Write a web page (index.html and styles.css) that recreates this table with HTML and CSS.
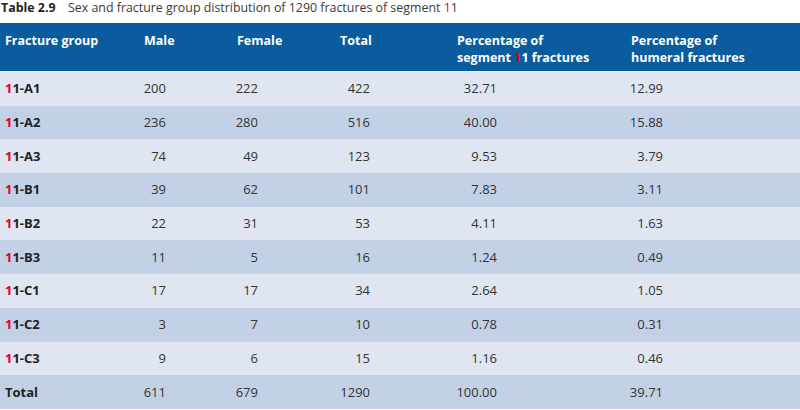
FILE: index.html
```html
<!DOCTYPE html>
<html lang="en">
<head>
<meta charset="utf-8">
<title>Table 2.9</title>
<link rel="stylesheet" href="styles.css">
</head>
<body>
<div class="caption">
  <span class="caption-label">Table 2.9</span>
  <span class="caption-text">Sex and fracture group distribution of 1290 fractures of segment <span class="red">1</span>1</span>
</div>
<table class="data">
  <colgroup>
    <col class="c1"><col class="c2"><col class="c3"><col class="c4"><col class="c5"><col class="c6">
  </colgroup>
  <thead>
    <tr>
      <th>Fracture group</th>
      <th>Male</th>
      <th>Female</th>
      <th>Total</th>
      <th>Percentage of<br>segment <span class="red">1</span>1 fractures</th>
      <th>Percentage of<br>humeral fractures</th>
    </tr>
  </thead>
  <tbody>
    <tr class="odd"><td class="grp"><span class="red">1</span>1-A1</td><td class="n2">200</td><td class="n3">222</td><td class="n4">422</td><td class="n5">32.71</td><td class="n6">12.99</td></tr>
    <tr class="even"><td class="grp"><span class="red">1</span>1-A2</td><td class="n2">236</td><td class="n3">280</td><td class="n4">516</td><td class="n5">40.00</td><td class="n6">15.88</td></tr>
    <tr class="odd"><td class="grp"><span class="red">1</span>1-A3</td><td class="n2">74</td><td class="n3">49</td><td class="n4">123</td><td class="n5">9.53</td><td class="n6">3.79</td></tr>
    <tr class="even"><td class="grp"><span class="red">1</span>1-B1</td><td class="n2">39</td><td class="n3">62</td><td class="n4">101</td><td class="n5">7.83</td><td class="n6">3.11</td></tr>
    <tr class="odd"><td class="grp"><span class="red">1</span>1-B2</td><td class="n2">22</td><td class="n3">31</td><td class="n4">53</td><td class="n5">4.11</td><td class="n6">1.63</td></tr>
    <tr class="even"><td class="grp"><span class="red">1</span>1-B3</td><td class="n2">11</td><td class="n3">5</td><td class="n4">16</td><td class="n5">1.24</td><td class="n6">0.49</td></tr>
    <tr class="odd"><td class="grp"><span class="red">1</span>1-C1</td><td class="n2">17</td><td class="n3">17</td><td class="n4">34</td><td class="n5">2.64</td><td class="n6">1.05</td></tr>
    <tr class="even"><td class="grp"><span class="red">1</span>1-C2</td><td class="n2">3</td><td class="n3">7</td><td class="n4">10</td><td class="n5">0.78</td><td class="n6">0.31</td></tr>
    <tr class="odd"><td class="grp"><span class="red">1</span>1-C3</td><td class="n2">9</td><td class="n3">6</td><td class="n4">15</td><td class="n5">1.16</td><td class="n6">0.46</td></tr>
    <tr class="even"><td class="grp">Total</td><td class="n2">611</td><td class="n3">679</td><td class="n4">1290</td><td class="n5">100.00</td><td class="n6">39.71</td></tr>
  </tbody>
</table>
</body>
</html>
```
FILE: styles.css
```css
html, body {
  margin: 0;
  padding: 0;
  background: #ffffff;
}
body {
  width: 800px;
  height: 410px;
  overflow: hidden;
  font-family: "Open Sans", "Noto Sans", sans-serif;
  color: #333333;
}
.caption {
  height: 23px;
  display: flex;
  align-items: flex-start;
  font-size: 12.4px;
  line-height: 15px;
  padding-left: 1px;
  box-sizing: border-box;
}
.caption-label {
  font-weight: 700;
  color: #222222;
  width: 67px;
  flex: none;
}
.caption-text {
  color: #3a3a3a;
}
.red {
  color: #e2001a;
}
.data {
  width: 800px;
  border-collapse: separate;
  border-spacing: 0;
  table-layout: fixed;
}
.c1 { width: 139px; }
.c2 { width: 93px; }
.c3 { width: 103px; }
.c4 { width: 117px; }
.c5 { width: 174px; }
.c6 { width: 174px; }
.data thead tr {
  background: #0a5c9e;
}
.data th {
  height: 49px;
  box-sizing: border-box;
  color: #ffffff;
  font-weight: 700;
  font-size: 12.5px;
  line-height: 17px;
  text-align: left;
  vertical-align: top;
  padding: 9px 0 0 5px;
  border-bottom: 1px solid #e9eef6;
}
.odd { background: #dfe6f1; }
.even { background: #c3d1e7; }
.data td {
  height: 33.7px;
  box-sizing: border-box;
  font-size: 13px;
  line-height: 17px;
  padding: 0;
  vertical-align: middle;
  text-align: right;
}
.data td.grp {
  text-align: left;
  padding-left: 5px;
  font-weight: 700;
  color: #222222;
}
.data td.n2 { padding-right: 66px; }
.data td.n3 { padding-right: 77px; }
.data td.n4 { padding-right: 82px; }
.data td.n5 { padding-right: 129px; }
.data td.n6 { padding-right: 137px; }
```
